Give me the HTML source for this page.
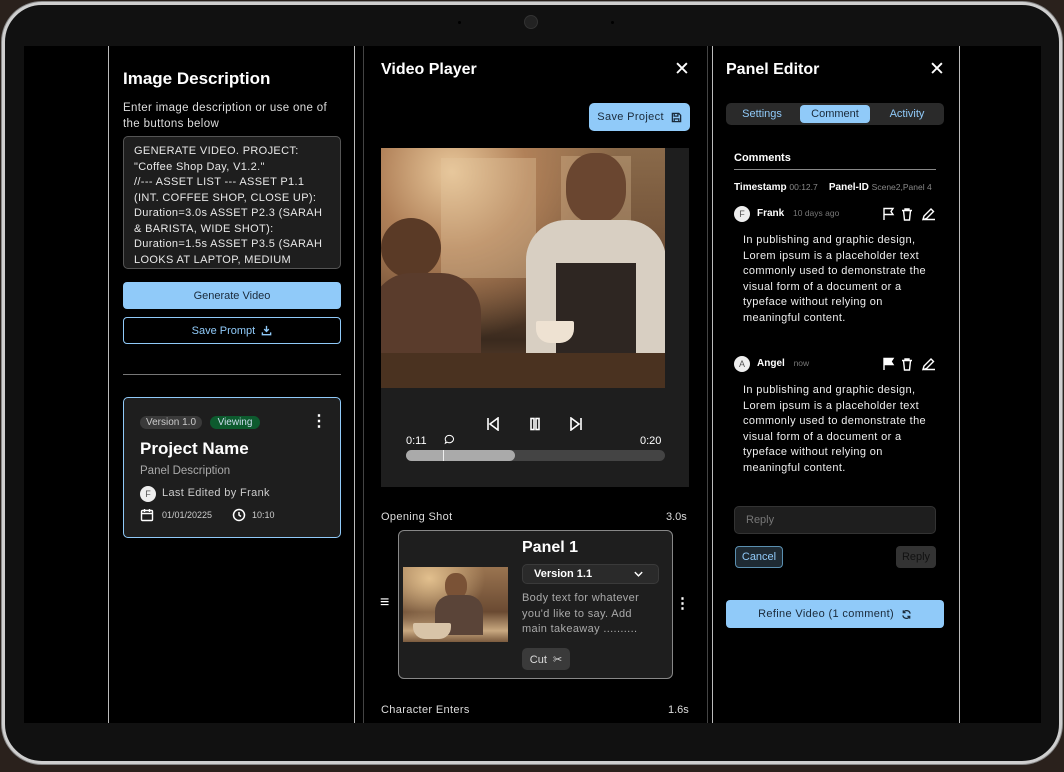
<!DOCTYPE html>
<html><head><meta charset="utf-8"><style>
*{box-sizing:border-box;margin:0;padding:0}
body{width:1064px;height:772px;background:#2a211c;font-family:"Liberation Sans",sans-serif;position:relative;overflow:hidden;color:#fff}
.dev{position:absolute;left:2px;top:2px;width:1060px;height:762px;border-radius:40px;background:#111;border:3px solid #cfcfcf;box-shadow:0 0 0 1px #888}
.scr{position:absolute;left:24px;top:46px;width:1017px;height:677px;background:#000;overflow:hidden}
.a{position:absolute}
.vl{position:absolute;top:0;height:677px;width:1px;background:#bbb}
.t{position:absolute;white-space:nowrap}
.btn{position:absolute;border-radius:4px;display:flex;align-items:center;justify-content:center;font-size:11px}
.ls{letter-spacing:.35px}
</style></head><body>
<div class="dev">
<div class="a" style="left:519px;top:10px;width:14px;height:14px;border-radius:50%;background:#222;border:1px solid #333"></div>
<div class="a" style="left:453px;top:16px;width:3px;height:3px;border-radius:50%;background:#000"></div>
<div class="a" style="left:606px;top:16px;width:3px;height:3px;border-radius:50%;background:#000"></div>
</div>
<div class="scr">
<div class="vl" style="left:84px"></div>
<div class="vl" style="left:330px"></div>
<div class="vl" style="left:339px;background:#444"></div>
<div class="vl" style="left:683px;background:#444"></div>
<div class="vl" style="left:688px"></div>
<div class="vl" style="left:935px"></div>

<!-- left panel -->
<div class="t" style="left:99px;top:23px;font-size:17px;font-weight:bold">Image Description</div>
<div class="a ls" style="left:99px;top:54px;width:210px;font-size:11.5px;line-height:16px;color:#ddd">Enter image description or use one of the buttons below</div>
<div class="a ls" style="left:99px;top:90px;width:218px;height:133px;background:#1e1e1e;border:1px solid #555;border-radius:5px;padding:7px 10px;font-size:11px;line-height:15.5px;color:#e8e8e8;overflow:hidden">GENERATE VIDEO. PROJECT: "Coffee Shop Day, V1.2."<br>//--- ASSET LIST --- ASSET P1.1 (INT. COFFEE SHOP, CLOSE UP): Duration=3.0s ASSET P2.3 (SARAH &amp; BARISTA, WIDE SHOT): Duration=1.5s ASSET P3.5 (SARAH LOOKS AT LAPTOP, MEDIUM SHOT):</div>
<div class="btn" style="left:99px;top:236px;width:218px;height:27px;background:#90caf9;color:#1a2a3a">Generate Video</div>
<div class="btn" style="left:99px;top:271px;width:218px;height:27px;border:1px solid #90caf9;color:#90caf9">Save Prompt&nbsp;&nbsp;<svg width="11" height="11" viewBox="0 0 12 12" fill="none" stroke="#90caf9" stroke-width="1.5"><path d="M6 1v6M3.5 4.5L6 7l2.5-2.5M1.5 8v2.5h9V8"/></svg></div>
<div class="a" style="left:99px;top:328px;width:218px;height:1px;background:#777"></div>
<div class="a" style="left:99px;top:351px;width:218px;height:141px;background:#1e1e1e;border:1px solid #90caf9;border-radius:5px"></div>
<div class="btn" style="left:116px;top:370px;width:62px;height:13px;background:#3a3a3a;border-radius:7px;font-size:10px;color:#ccc">Version 1.0</div>
<div class="btn" style="left:186px;top:370px;width:50px;height:13px;background:#0d5a2e;border-radius:7px;font-size:10px;color:#cde">Viewing</div>
<div class="t" style="left:287px;top:366px;font-size:16px;font-weight:bold;line-height:20px">⋮</div>
<div class="t" style="left:116px;top:393px;font-size:17px;font-weight:bold">Project Name</div>
<div class="t" style="left:116px;top:419px;font-size:11.5px;color:#aaa">Panel Description</div>
<div class="btn" style="left:116px;top:440px;width:16px;height:16px;border-radius:50%;background:#eee;color:#555;font-size:9px">F</div>
<div class="t ls" style="left:138px;top:441px;font-size:11px;color:#ccc">Last Edited by Frank</div>
<svg class="a" style="left:116px;top:462px" width="14" height="14" viewBox="0 0 14 14" fill="none" stroke="#fff" stroke-width="1.4"><rect x="1.5" y="2.5" width="11" height="10" rx="1"/><path d="M1.5 5.5h11M4.5 1v3M9.5 1v3"/></svg>
<div class="t" style="left:138px;top:464px;font-size:9px;color:#ccc">01/01/20225</div>
<svg class="a" style="left:208px;top:462px" width="14" height="14" viewBox="0 0 14 14" fill="none" stroke="#fff" stroke-width="1.5"><circle cx="7" cy="7" r="5.5"/><path d="M7 4v3l2 1.5"/></svg>
<div class="t" style="left:228px;top:464px;font-size:9px;color:#ccc">10:10</div>

<!-- middle -->
<div class="t" style="left:357px;top:15px;font-size:16px;font-weight:bold">Video Player</div>
<div class="t" style="left:650px;top:12px;font-size:19px">✕</div>
<div class="btn ls" style="left:565px;top:57px;width:101px;height:28px;background:#90caf9;color:#1a2a3a;border-radius:5px">Save Project&nbsp;&nbsp;<svg width="11" height="11" viewBox="0 0 12 12" fill="none" stroke="#1a2a3a" stroke-width="1.4"><path d="M1.5 1.5h7l2 2v7h-9z M3.5 1.5v3h4v-3M3.5 10.5v-3h5v3"/></svg></div>
<div class="a" style="left:357px;top:102px;width:308px;height:339px;background:#1e1e1e"></div>
<div class="a" style="left:357px;top:102px;width:284px;height:240px;overflow:hidden;background:radial-gradient(ellipse at 25% 10%,#e8c79a 0%,#b08058 25%,transparent 55%),linear-gradient(180deg,#8a6a4a 0%,#6a4a32 55%,#3a2a1e 80%,#6a4a32 100%)">
<div class="a" style="left:60px;top:10px;width:95px;height:120px;background:rgba(230,200,160,.35)"></div>
<div class="a" style="left:180px;top:8px;width:70px;height:70px;background:rgba(230,200,160,.3)"></div>
<div class="a" style="left:185px;top:5px;width:60px;height:70px;border-radius:45%;background:#6a4630"></div>
<div class="a" style="left:145px;top:72px;width:140px;height:170px;border-radius:40px 40px 0 0;background:#d8cfc2"></div>
<div class="a" style="left:175px;top:115px;width:80px;height:130px;background:#2e2622"></div>
<div class="a" style="left:0px;top:70px;width:60px;height:60px;border-radius:50%;background:#5a3a26"></div>
<div class="a" style="left:-10px;top:125px;width:110px;height:120px;border-radius:40px 40px 0 0;background:#5a3c2c"></div>
<div class="a" style="left:155px;top:173px;width:38px;height:22px;background:#eee2d2;border-radius:2px 2px 14px 14px"></div>
<div class="a" style="left:0px;top:205px;width:284px;height:35px;background:#4a3220"></div>
</div>
<svg class="a" style="left:462px;top:371px" width="14" height="14" viewBox="0 0 14 14" fill="none" stroke="#fff" stroke-width="1.6"><path d="M2 1v12M12 1L4 7l8 6z"/></svg>
<svg class="a" style="left:504px;top:371px" width="14" height="14" viewBox="0 0 14 14" fill="none" stroke="#fff" stroke-width="1.6"><rect x="3" y="1.5" width="3" height="11"/><rect x="8" y="1.5" width="3" height="11"/></svg>
<svg class="a" style="left:545px;top:371px" width="14" height="14" viewBox="0 0 14 14" fill="none" stroke="#fff" stroke-width="1.6"><path d="M12 1v12M2 1l8 6-8 6z"/></svg>
<div class="t" style="left:382px;top:389px;font-size:11px">0:11</div>
<svg class="a" style="left:420px;top:388px" width="11" height="11" viewBox="0 0 12 12" fill="none" stroke="#fff" stroke-width="1.1"><path d="M6 1.5a4.5 4 0 1 1-2.5 7.4L1.5 10l.7-2.2A4.5 4 0 0 1 6 1.5z"/></svg>
<div class="t" style="left:616px;top:389px;font-size:11px">0:20</div>
<div class="a" style="left:382px;top:404px;width:259px;height:11px;background:#444;border-radius:6px"></div>
<div class="a" style="left:382px;top:404px;width:109px;height:11px;background:#aaa;border-radius:6px"></div>
<div class="a" style="left:419px;top:404px;width:1px;height:11px;background:#eee"></div>
<div class="t ls" style="left:357px;top:465px;font-size:11px;color:#ddd">Opening Shot</div>
<div class="t" style="left:642px;top:465px;font-size:11px;color:#ddd">3.0s</div>
<div class="a" style="left:374px;top:484px;width:275px;height:149px;background:#1e1e1e;border:1px solid #888;border-radius:6px"></div>
<div class="a" style="left:379px;top:521px;width:105px;height:75px;overflow:hidden;background:radial-gradient(ellipse at 25% 15%,#e2c08e,transparent 50%),linear-gradient(180deg,#9a7450,#6a4a32 60%,#c8a880 85%,#7a5a3e)">
<div class="a" style="left:42px;top:6px;width:22px;height:26px;border-radius:45%;background:#7a5236"></div>
<div class="a" style="left:32px;top:28px;width:48px;height:40px;border-radius:16px 16px 0 0;background:#5a4438"></div>
<div class="a" style="left:10px;top:56px;width:38px;height:16px;border-radius:2px 2px 12px 12px;background:#d8c4a8"></div>
</div>
<div class="t" style="left:356px;top:548px;font-size:16px">≡</div>
<div class="t" style="left:498px;top:493px;font-size:16px;font-weight:bold">Panel 1</div>
<div class="a" style="left:498px;top:518px;width:137px;height:20px;background:#2a2a2a;border:1px solid #3a3a3a;border-radius:5px"></div>
<div class="t" style="left:510px;top:522px;font-size:11px;font-weight:bold">Version 1.1</div>
<svg class="a" style="left:609px;top:523px" width="11" height="10" viewBox="0 0 12 10" fill="none" stroke="#fff" stroke-width="1.6"><path d="M2 3l4 4 4-4"/></svg>
<div class="a ls" style="left:498px;top:545px;width:128px;font-size:11px;line-height:15.5px;color:#aaa">Body text for whatever you'd like to say. Add main takeaway ..........</div>
<div class="btn" style="left:498px;top:602px;width:48px;height:22px;background:#3a3a3a;color:#ddd;border-radius:5px">Cut&nbsp;&nbsp;✂</div>
<div class="t" style="left:651px;top:548px;font-size:15px;font-weight:bold">⋮</div>
<div class="t ls" style="left:357px;top:658px;font-size:11px;color:#ddd">Character Enters</div>
<div class="t" style="left:644px;top:658px;font-size:11px;color:#ddd">1.6s</div>

<!-- right -->
<div class="t" style="left:702px;top:15px;font-size:16px;font-weight:bold">Panel Editor</div>
<div class="t" style="left:905px;top:12px;font-size:19px">✕</div>
<div class="a" style="left:702px;top:57px;width:218px;height:22px;background:#2a2a2a;border-radius:5px"></div>
<div class="btn" style="left:776px;top:59px;width:70px;height:18px;background:#90caf9;color:#1a2a3a">Comment</div>
<div class="btn" style="left:706px;top:59px;width:64px;height:18px;color:#90caf9">Settings</div>
<div class="btn" style="left:850px;top:59px;width:66px;height:18px;color:#90caf9">Activity</div>
<div class="t" style="left:710px;top:106px;font-size:11px;font-weight:bold">Comments</div>
<div class="a" style="left:710px;top:123px;width:202px;height:1px;background:#888"></div>
<div class="t" style="left:710px;top:136px;font-size:10px;font-weight:bold">Timestamp <span style="font-weight:normal;color:#888;font-size:8.5px">00:12.7</span>&nbsp;&nbsp;&nbsp;&nbsp;Panel-ID <span style="font-weight:normal;color:#888;font-size:8.5px">Scene2,Panel 4</span></div>
<div class="btn" style="left:710px;top:160px;width:16px;height:16px;border-radius:50%;background:#eee;color:#555;font-size:9px">F</div>
<div class="t" style="left:733px;top:162px;font-size:10px;font-weight:bold">Frank <span style="font-weight:normal;color:#777;font-size:8.5px;margin-left:6px">10 days ago</span></div>
<div class="a ls" style="left:719px;top:187px;width:190px;font-size:11px;line-height:15.5px;color:#eee">In publishing and graphic design, Lorem ipsum is a placeholder text commonly used to demonstrate the visual form of a document or a typeface without relying on meaningful content.</div>
<div class="btn" style="left:710px;top:310px;width:16px;height:16px;border-radius:50%;background:#eee;color:#555;font-size:9px">A</div>
<div class="t" style="left:733px;top:312px;font-size:10px;font-weight:bold">Angel <span style="font-weight:normal;color:#777;font-size:8.5px;margin-left:6px">now</span></div>
<div class="a ls" style="left:719px;top:337px;width:190px;font-size:11px;line-height:15.5px;color:#eee">In publishing and graphic design, Lorem ipsum is a placeholder text commonly used to demonstrate the visual form of a document or a typeface without relying on meaningful content.</div>
<svg class="a" style="left:858px;top:161px" width="56" height="14" viewBox="0 0 56 14" fill="none" stroke="#fff" stroke-width="1.4"><path d="M2 13V1.5h9l-2 3 2 3H2"/><path d="M20 3.5h10M23 3.5V2h4v1.5M21.5 3.5l1 9.5h5l1-9.5"/><path d="M41 12.5h12M41 12.5l1-3.5 7-7 2.5 2.5-7 7z"/></svg>
<svg class="a" style="left:858px;top:311px" width="56" height="14" viewBox="0 0 56 14" fill="none" stroke="#fff" stroke-width="1.4"><path d="M2 13V1.5h9l-2 3 2 3H2z" fill="#fff"/><path d="M20 3.5h10M23 3.5V2h4v1.5M21.5 3.5l1 9.5h5l1-9.5"/><path d="M41 12.5h12M41 12.5l1-3.5 7-7 2.5 2.5-7 7z"/></svg>
<div class="a" style="left:710px;top:460px;width:202px;height:28px;background:#1e1e1e;border:1px solid #333;border-radius:5px"></div>
<div class="t" style="left:722px;top:468px;font-size:11px;color:#777">Reply</div>
<div class="btn" style="left:711px;top:500px;width:48px;height:22px;background:#1e2a33;border:1px solid #5a8fb0;color:#90caf9">Cancel</div>
<div class="btn" style="left:872px;top:500px;width:40px;height:22px;background:#333;color:#111">Reply</div>
<div class="btn ls" style="left:702px;top:554px;width:218px;height:28px;background:#90caf9;color:#1a2a3a">Refine Video (1 comment)&nbsp;&nbsp;<svg width="11" height="11" viewBox="0 0 12 12" fill="none" stroke="#1a2a3a" stroke-width="1.4"><path d="M10 5A4 4 0 0 0 2.5 4M2 7a4 4 0 0 0 7.5 1M2.5 1.5V4H5M9.5 10.5V8H7"/></svg></div>
</div>
</body></html>
